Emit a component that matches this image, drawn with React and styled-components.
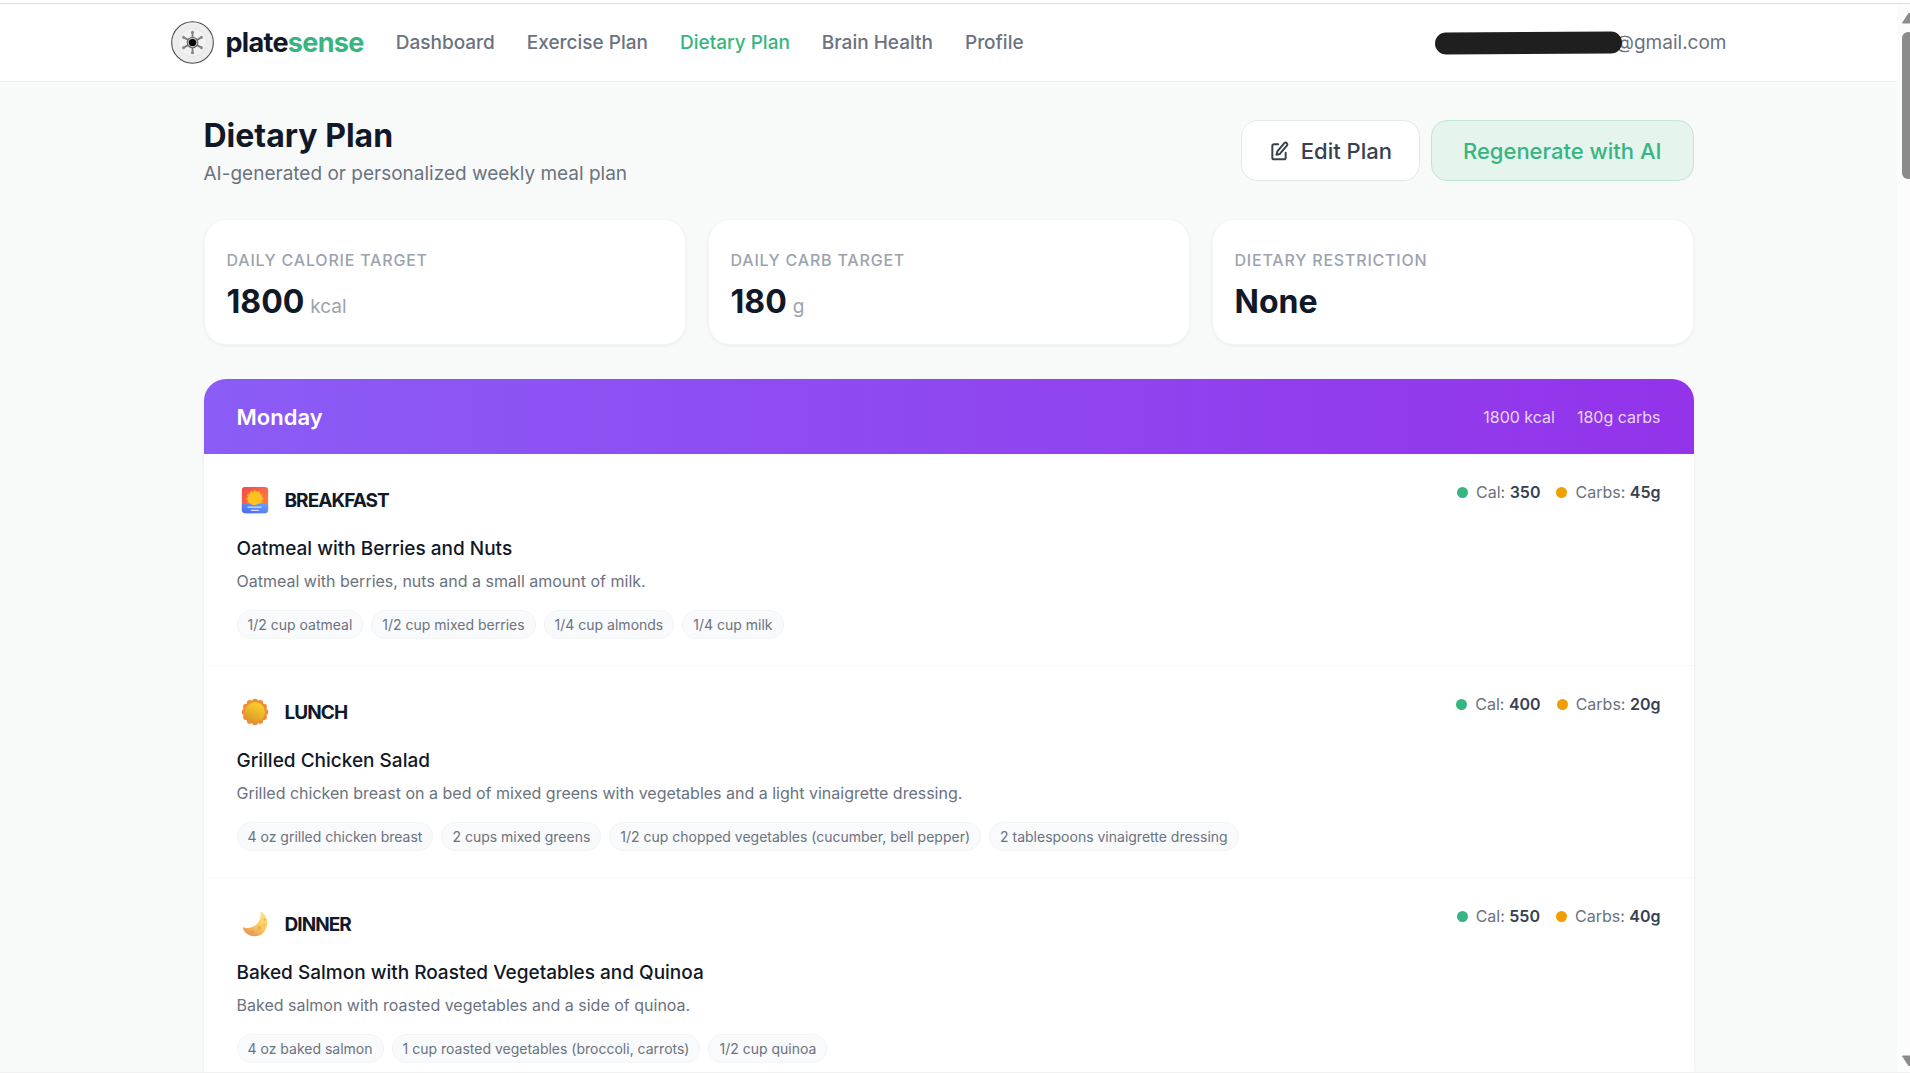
import styled, { createGlobalStyle } from "styled-components";

const comidas = [
  {
    tipo: "Breakfast",
    icono: "sunrise",
    nombre: "Oatmeal with Berries and Nuts",
    descripcion: "Oatmeal with berries, nuts and a small amount of milk.",
    cal: 350,
    carbs: 45,
    ingredientes: ["1/2 cup oatmeal", "1/2 cup mixed berries", "1/4 cup almonds", "1/4 cup milk"],
  },
  {
    tipo: "Lunch",
    icono: "sun",
    nombre: "Grilled Chicken Salad",
    descripcion: "Grilled chicken breast on a bed of mixed greens with vegetables and a light vinaigrette dressing.",
    cal: 400,
    carbs: 20,
    ingredientes: [
      "4 oz grilled chicken breast",
      "2 cups mixed greens",
      "1/2 cup chopped vegetables (cucumber, bell pepper)",
      "2 tablespoons vinaigrette dressing",
    ],
  },
  {
    tipo: "Dinner",
    icono: "moon",
    nombre: "Baked Salmon with Roasted Vegetables and Quinoa",
    descripcion: "Baked salmon with roasted vegetables and a side of quinoa.",
    cal: 550,
    carbs: 40,
    ingredientes: ["4 oz baked salmon", "1 cup roasted vegetables (broccoli, carrots)", "1/2 cup quinoa"],
  },
];

const enlaces = ["Dashboard", "Exercise Plan", "Dietary Plan", "Brain Health", "Profile"];

const puntas = (n, r) =>
  Array.from({ length: n }, (_, i) => {
    const a = (i * 2 * Math.PI) / n - Math.PI / 2;
    return [16 + r * Math.cos(a), 16 + r * Math.sin(a)];
  });

function Logo() {
  return (
    <svg width="43" height="43" viewBox="0 0 44 44" aria-hidden="true">
      <circle cx="22" cy="22" r="21.3" fill="#ededed" stroke="#4a4a4a" strokeWidth="1.1" />
      <circle cx="22" cy="22" r="14.5" fill="#f2f2f2" stroke="#e2e2e2" strokeWidth="0.8" />
      {[0, 60, 120, 180, 240, 300].map((g) => (
        <g key={g} transform={`rotate(${g} 22 22)`}>
          <path d="M22 17V12" stroke="#777" strokeWidth="1.8" />
          <circle cx="22" cy="11.5" r="1.6" fill="#8a8a8a" />
        </g>
      ))}
      <circle cx="22" cy="22" r="5.4" fill="#bdbdbd" stroke="#6d6d6d" strokeWidth="1.2" />
      <circle cx="22" cy="22" r="3.7" fill="#000" />
    </svg>
  );
}

function IconoComida({ tipo }) {
  if (tipo === "sunrise") {
    return (
      <svg width="28" height="28" viewBox="0 0 32 32" aria-hidden="true">
        <defs>
          <linearGradient id="cielo" x1="0" y1="0" x2="1" y2="1">
            <stop offset="0" stopColor="#f0484e" />
            <stop offset="1" stopColor="#ff8a3c" />
          </linearGradient>
          <linearGradient id="mar" x1="0" y1="1" x2="1" y2="0">
            <stop offset="0" stopColor="#4a63f0" />
            <stop offset="1" stopColor="#62a8ff" />
          </linearGradient>
          <clipPath id="marco">
            <rect x="1" y="1" width="30" height="30" rx="3.5" />
          </clipPath>
        </defs>
        <g clipPath="url(#marco)">
          <rect width="32" height="32" fill="url(#cielo)" />
          {puntas(12, 8).map(([x, y]) => (
            <circle key={`${x}-${y}`} cx={x} cy={y - 1.5} r="2" fill="#f9a21b" />
          ))}
          <circle cx="16" cy="14.5" r="8" fill="#fcc21f" />
          <path d="M0 20q3 1.5 6 .5t6 .5 6 0 6-.5 8-.5v12H0z" fill="url(#mar)" />
          <path d="M8 24.2h15M12 27.8h8" stroke="#d9ddff" strokeWidth="1.3" strokeLinecap="round" />
        </g>
      </svg>
    );
  }
  if (tipo === "sun") {
    return (
      <svg width="28" height="28" viewBox="0 0 32 32" aria-hidden="true">
        <defs>
          <linearGradient id="sol" x1="0.8" y1="0" x2="0.3" y2="1">
            <stop offset="0" stopColor="#ffd62f" />
            <stop offset="1" stopColor="#d99a26" />
          </linearGradient>
        </defs>
        {puntas(12, 11.7).map(([x, y]) => (
          <circle key={`${x}-${y}`} cx={x} cy={y} r="3.5" fill="#f08c34" />
        ))}
        <circle cx="16" cy="16" r="11.4" fill="url(#sol)" />
      </svg>
    );
  }
  return (
    <svg width="28" height="28" viewBox="0 0 32 32" aria-hidden="true">
      <defs>
        <linearGradient id="luna" x1="0.8" y1="0" x2="0.3" y2="1">
          <stop offset="0" stopColor="#ffe27a" />
          <stop offset="0.6" stopColor="#f9c765" />
          <stop offset="1" stopColor="#e58f51" />
        </linearGradient>
      </defs>
      <path d="M23.4 2.2c4.8 3 7.1 8 6.6 13.6C29.3 24 23.5 30 16 30 9.6 30 4.2 26.5 2.2 20.9c-.3-1 .6-1.3 1.4-1 7 2.3 16.6-2 18.6-11.4.4-2 .3-3.8.2-5.5 0-.8.4-1.1 1-.8z" fill="url(#luna)" />
      <circle cx="21" cy="20.5" r="2.6" fill="#f3b04f" />
      <circle cx="13.5" cy="25" r="1.6" fill="#e89a4d" />
      <circle cx="27" cy="11" r="1.2" fill="#f0b04c" />
      <circle cx="26.5" cy="17" r="1.3" fill="#f3b653" />
    </svg>
  );
}

function IconoEditar() {
  return (
    <svg width="20" height="20" viewBox="0 0 24 24" fill="none" stroke="currentColor" strokeWidth="2.4" strokeLinecap="round" strokeLinejoin="round" aria-hidden="true">
      <path d="M11 4H6a2 2 0 0 0-2 2v14a2 2 0 0 0 2 2h12a2 2 0 0 0 2-2v-6" />
      <path d="M18.4 2.6a2.1 2.1 0 0 1 3 3L13 15.5 9 16.5l1-4z" />
    </svg>
  );
}

function Comida({ comida }) {
  return (
    <FilaComida>
      <CabeceraComida>
        <TipoComida>
          <CajaIcono>
            <IconoComida tipo={comida.icono} />
          </CajaIcono>
          {comida.tipo}
        </TipoComida>
        <Macros>
          <Macro $color="#37b580">
            Cal: <strong>{comida.cal}</strong>
          </Macro>
          <Macro $color="#f09e06">
            Carbs: <strong>{comida.carbs}g</strong>
          </Macro>
        </Macros>
      </CabeceraComida>
      <NombreComida>{comida.nombre}</NombreComida>
      <Descripcion>{comida.descripcion}</Descripcion>
      <Ingredientes>
        {comida.ingredientes.map((ing) => (
          <Ingrediente key={ing}>{ing}</Ingrediente>
        ))}
      </Ingredientes>
    </FilaComida>
  );
}

export default function App() {
  return (
    <Ventana>
      <GlobalStyle />
      <Pagina>
        <BarraNav>
          <ContenidoNav>
            <Marca href="#">
              <Logo />
              <span>
                plate<em>sense</em>
              </span>
            </Marca>
            <Menu>
              {enlaces.map((e) => (
                <Enlace key={e} href="#" $activo={e === "Dietary Plan"}>
                  {e}
                </Enlace>
              ))}
            </Menu>
            <Usuario>
              <svg width="188" height="24" viewBox="0 0 188 24" aria-hidden="true">
                <path d="M11 12.5L176 11.5" stroke="#1f1f1f" strokeWidth="22" strokeLinecap="round" />
              </svg>
              <span>@gmail.com</span>
            </Usuario>
          </ContenidoNav>
        </BarraNav>
        <Contenido>
          <Encabezado>
            <div>
              <Titulo>Dietary Plan</Titulo>
              <Subtitulo>AI-generated or personalized weekly meal plan</Subtitulo>
            </div>
            <Acciones>
              <Boton type="button">
                <IconoEditar />
                Edit Plan
              </Boton>
              <Boton type="button" $verde>
                Regenerate with AI
              </Boton>
            </Acciones>
          </Encabezado>
          <Objetivos>
            <Tarjeta>
              <Etiqueta>Daily Calorie Target</Etiqueta>
              <Valor>
                1800 <small>kcal</small>
              </Valor>
            </Tarjeta>
            <Tarjeta>
              <Etiqueta>Daily Carb Target</Etiqueta>
              <Valor>
                180 <small>g</small>
              </Valor>
            </Tarjeta>
            <Tarjeta>
              <Etiqueta>Dietary Restriction</Etiqueta>
              <Valor>None</Valor>
            </Tarjeta>
          </Objetivos>
          <Dia>
            <CabeceraDia>
              <h2>Monday</h2>
              <Totales>
                <span>1800 kcal</span>
                <span>180g carbs</span>
              </Totales>
            </CabeceraDia>
            {comidas.map((c) => (
              <Comida key={c.tipo} comida={c} />
            ))}
          </Dia>
        </Contenido>
      </Pagina>
      <BarraScroll aria-hidden="true">
        <Flecha width="16" height="12" viewBox="0 0 16 12">
          <path d="M8 1L14.5 11H1.5z" />
        </Flecha>
        <Pulgar />
        <Flecha width="16" height="12" viewBox="0 0 16 12">
          <path d="M8 11L14.5 1H1.5z" />
        </Flecha>
      </BarraScroll>
    </Ventana>
  );
}

const GlobalStyle = createGlobalStyle`
  * {
    box-sizing: border-box;
  }
  body {
    margin: 0;
    font-family: Inter, "Liberation Sans", sans-serif;
    background: #f8faf9;
    color: #111827;
  }
  h1, h2, h3, h4, p, ul {
    margin: 0;
    padding: 0;
  }
`;
const Ventana = styled.div`
  height: 100vh;
  display: flex;
  overflow: hidden;
  border-top: 3px solid #fff;
  border-bottom: 1px solid #f0f0f0;
`;
const Pagina = styled.div`
  flex: 1;
  min-width: 0;
  overflow: hidden;
  border-top: 1px solid #dfdfdf;
`;
const BarraNav = styled.header`
  background: #fff;
  border-bottom: 1px solid #edf0f0;
`;
const ContenidoNav = styled.div`
  max-width: 1556px;
  height: 77px;
  margin: 0 auto;
  display: flex;
  align-items: center;
`;
const Marca = styled.a`
  display: flex;
  align-items: center;
  gap: 12px;
  font-size: 27px;
  font-weight: 700;
  letter-spacing: -0.025em;
  color: #111827;
  text-decoration: none;

  em {
    font-style: normal;
    color: #37b580;
  }
`;
const Menu = styled.nav`
  display: flex;
  gap: 32px;
  margin-left: 32px;
`;
const Enlace = styled.a`
  font-size: 19px;
  font-weight: 500;
  text-decoration: none;
  color: ${({ $activo }) => ($activo ? "#37b580" : "#6b7280")};
`;
const Usuario = styled.div`
  margin-left: auto;
  display: flex;
  align-items: center;
  font-size: 19px;
  color: #6b7280;

  svg {
    position: relative;
    z-index: 1;
  }
  span {
    margin-left: -7px;
  }
`;
const Contenido = styled.main`
  max-width: 1490px;
  margin: 0 auto;
  padding-top: 31px;
`;
const Encabezado = styled.section`
  display: flex;
  align-items: center;
  justify-content: space-between;
  margin-bottom: 31px;
`;
const Titulo = styled.h1`
  font-size: 32px;
  line-height: 46px;
  font-weight: 700;
`;
const Subtitulo = styled.p`
  margin-top: 1px;
  font-size: 19px;
  line-height: 28px;
  color: #6b7280;
`;
const Acciones = styled.div`
  display: flex;
  gap: 11px;
`;
const Boton = styled.button`
  height: 61px;
  padding: 0 ${({ $verde }) => ($verde ? "31px" : "27px")};
  display: flex;
  align-items: center;
  gap: 12px;
  border-radius: 16px;
  border: 1px solid ${({ $verde }) => ($verde ? "#bfe7d5" : "#e5e7eb")};
  background: ${({ $verde }) => ($verde ? "#e5f4ed" : "#fff")};
  color: ${({ $verde }) => ($verde ? "#37b580" : "#374151")};
  font-family: inherit;
  font-size: 22px;
  font-weight: 500;
`;
const Objetivos = styled.section`
  display: grid;
  grid-template-columns: repeat(3, 1fr);
  gap: 22px;
  margin-bottom: 34px;
`;
const Tarjeta = styled.div`
  background: #fff;
  border: 1px solid #f3f4f6;
  border-radius: 22px;
  box-shadow: 0 1px 3px rgba(0, 0, 0, 0.06);
  padding: 28px 22px 20px;
`;
const Etiqueta = styled.p`
  font-size: 16px;
  line-height: 24px;
  font-weight: 500;
  letter-spacing: 0.05em;
  text-transform: uppercase;
  color: #9ca3af;
`;
const Valor = styled.p`
  display: flex;
  align-items: baseline;
  gap: 6px;
  margin-top: 8px;
  font-size: 32px;
  line-height: 44px;
  font-weight: 700;

  small {
    font-size: 19px;
    line-height: 22px;
    font-weight: 400;
    color: #9ca3af;
  }
`;
const Dia = styled.section`
  background: #fff;
  border-radius: 22px;
  box-shadow: 0 1px 3px rgba(0, 0, 0, 0.08);
  overflow: hidden;
`;
const CabeceraDia = styled.div`
  height: 75px;
  padding: 0 33px;
  display: flex;
  align-items: center;
  justify-content: space-between;
  background: linear-gradient(to right, #8b5cf6, #9333ea);
  color: #fff;

  h2 {
    font-size: 22px;
    font-weight: 600;
  }
`;
const Totales = styled.div`
  display: flex;
  gap: 22px;
  font-size: 16px;
  color: rgba(255, 255, 255, 0.8);
`;
const FilaComida = styled.article`
  padding: 27px 33px 26px;
  border-bottom: 1px solid #f8f9fa;
`;
const CabeceraComida = styled.div`
  display: flex;
  justify-content: space-between;
  align-items: flex-start;
`;
const TipoComida = styled.h3`
  display: flex;
  align-items: center;
  gap: 11px;
  height: 38px;
  font-size: 19px;
  font-weight: 700;
  letter-spacing: -0.05em;
  text-transform: uppercase;
`;
const CajaIcono = styled.span`
  width: 37px;
  display: flex;
  justify-content: center;
`;
const Macros = styled.div`
  display: flex;
  gap: 16px;
  font-size: 16px;
  line-height: 22px;
  color: #6b7280;

  strong {
    font-weight: 600;
    color: #374151;
  }
`;
const Macro = styled.span`
  &::before {
    content: "";
    display: inline-block;
    width: 11px;
    height: 11px;
    margin-right: 8px;
    border-radius: 50%;
    background: ${({ $color }) => $color};
  }
`;
const NombreComida = styled.h4`
  margin-top: 16px;
  font-size: 19px;
  line-height: 28px;
  font-weight: 500;
`;
const Descripcion = styled.p`
  margin-top: 5px;
  font-size: 16px;
  line-height: 26px;
  color: #6b7280;
`;
const Ingredientes = styled.ul`
  display: flex;
  flex-wrap: wrap;
  gap: 8px;
  margin-top: 16px;
  list-style: none;
`;
const Ingrediente = styled.li`
  padding: 0 10px;
  font-size: 14px;
  line-height: 27px;
  font-weight: 400;
  color: #6b7280;
  background: #f9fafb;
  border: 1px solid #f3f4f6;
  border-radius: 14px;
`;
const BarraScroll = styled.div`
  width: 13px;
  display: flex;
  flex-direction: column;
  padding: 8px 0 5px 4px;
  background: #fcfcfc;
  border-top: 1px solid #dfdfdf;
  overflow: hidden;
`;
const Flecha = styled.svg`
  flex: none;
  fill: #8b8b8b;
  stroke: #8b8b8b;
  stroke-linejoin: round;
`;
const Pulgar = styled.div`
  width: 12px;
  height: 147px;
  margin: 8px 0 auto 1px;
  border-radius: 6px;
  background: #8b8b8b;
`;
